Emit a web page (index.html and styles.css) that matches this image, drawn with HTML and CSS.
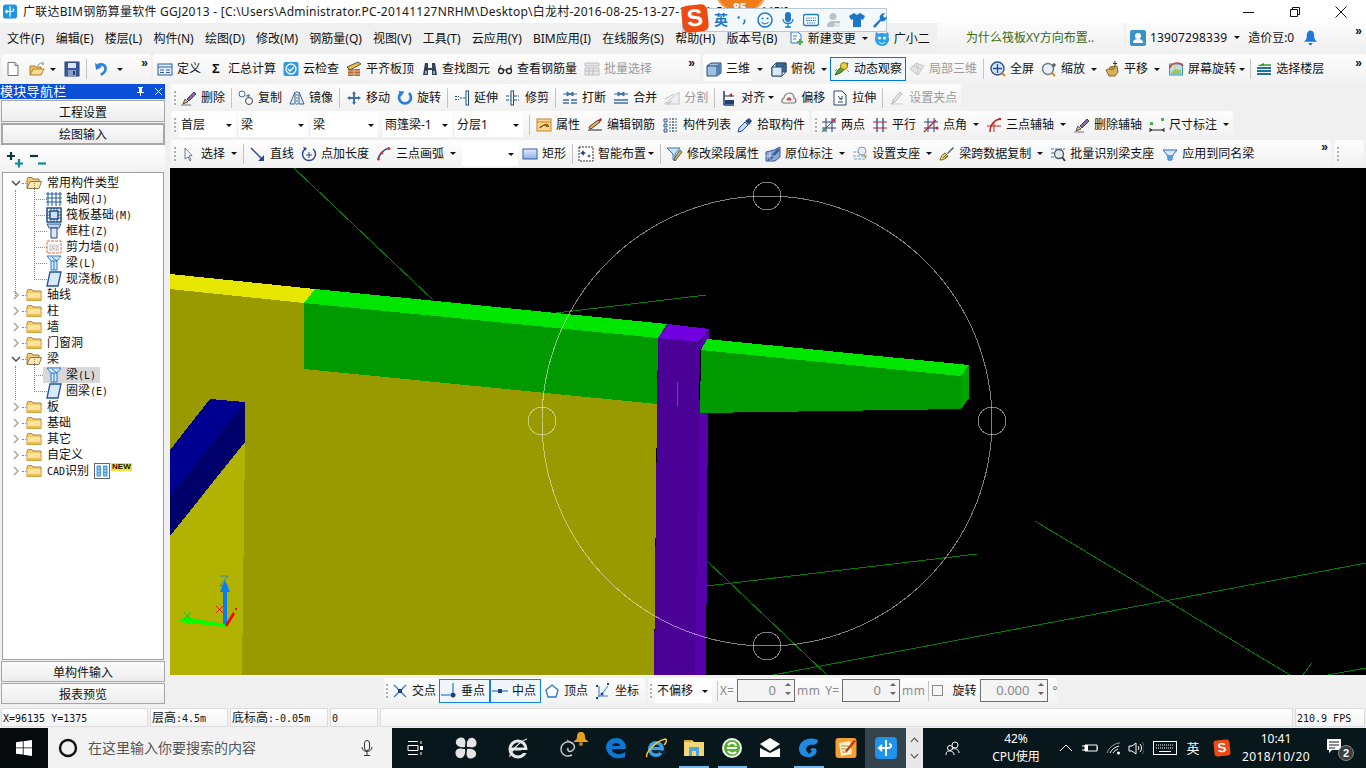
FILE: index.html
```html
<!DOCTYPE html>
<html lang="zh-CN">
<head>
<meta charset="utf-8">
<title>广联达BIM钢筋算量软件 GGJ2013</title>
<link rel="stylesheet" href="styles.css">
</head>
<body>
<svg class="defs" aria-hidden="true">
<symbol id="new" viewBox="0 0 16 16"><path d="M3 1.500h7l3 3v10H3z" fill="#fff" stroke="#777"/><path d="M10 1.500v3h3" fill="#ddd" stroke="#777"/></symbol>
<symbol id="open" viewBox="0 0 16 16"><path d="M1 14V5h5l1 1h5v2" fill="#eec45e" stroke="#a8842c"/><path d="M4 8h11l-3 6H1z" fill="#f8dc90" stroke="#a8842c"/><path d="M9 5c1-3 3-3 5-3l-1-1 2 2-2 1" fill="none" stroke="#6f8f8f"/></symbol>
<symbol id="save" viewBox="0 0 16 16"><rect x="1" y="1" width="14" height="14" fill="#37589f" stroke="#27407a"/><rect x="4" y="2" width="8" height="5" fill="#dce6f4"/><rect x="4" y="9" width="8" height="6" fill="#8b9dc2"/><rect x="9" y="10" width="2" height="4" fill="#27407a"/></symbol>
<symbol id="undo" viewBox="0 0 16 16"><path d="M5 4c5-2 9 1 7 6-1 2-3 3-4 4" fill="none" stroke="#2e7fd6" stroke-width="2.600"/><path d="M2 2l1 7 6-3z" fill="#2e7fd6"/></symbol>
<symbol id="def" viewBox="0 0 16 16"><rect x="1" y="3" width="14" height="11" fill="#e4effa" stroke="#2c5f9c"/><path d="M1 6h14M3 9h4M3 11.500h4M9 9h4M9 11.500h4" stroke="#2c5f9c" fill="none"/></symbol>
<symbol id="cloud" viewBox="0 0 16 16"><rect x="0.500" y="1" width="15" height="14" rx="2" fill="#2f9ae4"/><circle cx="8" cy="8" r="5" fill="none" stroke="#fff" stroke-width="1.300"/><path d="M5 8l2 2 4-4" fill="none" stroke="#fff" stroke-width="1.300"/></symbol>
<symbol id="flat" viewBox="0 0 16 16"><rect x="2" y="8" width="12" height="7" fill="#b06a3a"/><path d="M2 10h12M2 13h12M8 8v7" stroke="#e8c090"/><path d="M1 6l11-5 3 2L4 9z" fill="#f1c232" stroke="#555"/></symbol>
<symbol id="binoc" viewBox="0 0 16 16"><path d="M3 2h3v5h4V2h3l2 12H10V9H6v5H1z" fill="#33415a"/><path d="M3 10h2v3H3zM11 10h2v3h-2z" fill="#8fa4c0"/></symbol>
<symbol id="glass" viewBox="0 0 16 16"><circle cx="4" cy="10" r="2.500" fill="none" stroke="#222" stroke-width="1.300"/><circle cx="12" cy="10" r="2.500" fill="none" stroke="#222" stroke-width="1.300"/><path d="M6 9h4M2 8l2-4M14 8V4" fill="none" stroke="#222"/></symbol>
<symbol id="batch" viewBox="0 0 16 16"><path d="M1 2h14v3H1zM1 7h14v7H1z" fill="#e8e8e8" stroke="#c0c0c0"/><path d="M5 7v7M9 7v7M1 10h14" stroke="#c0c0c0"/></symbol>
<symbol id="cube" viewBox="0 0 16 16"><path d="M1 5l4-3h10v10l-4 3H1z" fill="#9dc3e6" stroke="#2a4a6a"/><path d="M1 5h10v10M11 5l4-3" fill="none" stroke="#2a4a6a"/><path d="M11 5l4-3v10l-4 3z" fill="#4f84b8"/></symbol>
<symbol id="top" viewBox="0 0 16 16"><path d="M1 6l4-4h10v9l-4 4H1z" fill="#fff" stroke="#2a4a6a"/><path d="M5 2h10v9H5z" fill="#3a6a9c" stroke="#2a4a6a"/><path d="M1 6h10v9H1z" fill="#dce8f4" stroke="#2a4a6a"/><path d="M1 6l4-4M11 6l4-4M11 15l4-4" stroke="#2a4a6a"/></symbol>
<symbol id="orbit" viewBox="0 0 16 16"><path d="M1 14c3-6 7-10 13-12-2 6-6 10-13 12z" fill="#5aa02c" stroke="#2d6d1a"/><circle cx="10" cy="5" r="3.500" fill="#e8d040" stroke="#8a7a10"/><path d="M3 8l-2 2M13 9l2 2" stroke="#999"/></symbol>
<symbol id="loc3d" viewBox="0 0 16 16"><path d="M1 8l6-6 8 3-6 9z" fill="#e4e4e4" stroke="#c4c4c4"/><path d="M4 5l8 3M7 2l2 6-1 5" stroke="#cacaca" fill="none"/></symbol>
<symbol id="fit" viewBox="0 0 16 16"><circle cx="7.500" cy="7.500" r="6.500" fill="#d5e4f6" stroke="#2f4f86" stroke-width="1.400"/><path d="M7.500 3v9M3 7.500h9" stroke="#1f4f96" stroke-width="1.300"/><path d="M12 12l3 3" stroke="#d08a20" stroke-width="2"/></symbol>
<symbol id="zoom" viewBox="0 0 16 16"><circle cx="7" cy="8" r="5.500" fill="#e9eff6" stroke="#6a7a8a" stroke-width="1.400"/><path d="M11 12l3 3" stroke="#c88a20" stroke-width="2"/><path d="M13 2v4M11 4h4" stroke="#333"/></symbol>
<symbol id="pan" viewBox="0 0 16 16"><path d="M2 9l3-1 1-2 7-1 1 6-3 4H5z" fill="#d8b060" stroke="#8a6a20"/><path d="M5 8l4 1M7 6l3 2M10 5l1 3" stroke="#8a6a20"/><path d="M11 0v5M9 2.500h4" stroke="#333"/></symbol>
<symbol id="srot" viewBox="0 0 16 16"><rect x="1.500" y="3" width="13" height="11" fill="#bfe0f4" stroke="#3a90c8"/><path d="M3 11l4-3 6 1v4H3z" fill="#9cc85a"/><circle cx="7" cy="6" r="1.500" fill="#f4d050"/><path d="M2 7C3 2 11 0 15 5" fill="none" stroke="#d8402a" stroke-width="1.500"/></symbol>
<symbol id="floor" viewBox="0 0 16 16"><path d="M1 7h14M1 10h14M1 13h14" stroke="#1f6fa8" stroke-width="1.800"/><path d="M1 5l7-3v3z" fill="#2ca02c"/><path d="M8 4h7" stroke="#2ca02c" stroke-width="1.500"/></symbol>
<symbol id="brush" viewBox="0 0 16 16"><path d="M2 14l2-5 3 3z" fill="#e8b860" stroke="#555"/><path d="M6 9l7-7 2 2-7 7z" fill="#8a6ab0" stroke="#444"/><path d="M0 15h10" stroke="#777"/></symbol>
<symbol id="copy" viewBox="0 0 16 16"><circle cx="4" cy="4" r="3" fill="none" stroke="#4a6a9a"/><circle cx="11" cy="11" r="3.500" fill="none" stroke="#444"/><path d="M7 6l5-2-1 3z" fill="#4a6a9a"/></symbol>
<symbol id="mirror" viewBox="0 0 16 16"><path d="M1 14L6 2v12zM15 14L10 2v12z" fill="#e4eefa" stroke="#3a5f8a"/><path d="M8 1v14" stroke="#3a5f8a" stroke-dasharray="2 1"/></symbol>
<symbol id="move" viewBox="0 0 16 16"><path d="M8 1l2 3H9v3h3V6l3 2-3 2V9H9v3h1l-2 3-2-3h1V9H4v1L1 8l3-2v1h3V4H6z" fill="#3f6fa8"/></symbol>
<symbol id="rot" viewBox="0 0 16 16"><path d="M4 3a6 6 0 1 0 8 0" fill="none" stroke="#2e7fd6" stroke-width="2.800"/><path d="M1.500 1l6 .5-3.500 5z" fill="#2e7fd6"/></symbol>
<symbol id="ext" viewBox="0 0 16 16"><path d="M1 6.500h4M1 9.500h4M6 8h5" stroke="#1f4f8a" stroke-dasharray="2 1"/><path d="M1 6.500h2M1 9.500h2" stroke="#1f4f8a"/><rect x="12" y="1" width="2.500" height="14" fill="#f4f8fc" stroke="#1f4f8a"/></symbol>
<symbol id="trim" viewBox="0 0 16 16"><path d="M1 6h6M1 10h6M9 6h5M9 10h5" stroke="#1f4f8a" stroke-dasharray="3 1"/><rect x="6" y="1" width="2.500" height="14" fill="#f4f8fc" stroke="#1f4f8a"/></symbol>
<symbol id="brk" viewBox="0 0 16 16"><path d="M1 10h6M9 10h6M1 13h6M9 13h6" stroke="#3f6fa8" stroke-width="1.500"/><path d="M1 4h4M5 2l3 2-3 2zM15 4h-4M11 2L8 4l3 2z" fill="#3f6fa8" stroke="#3f6fa8"/></symbol>
<symbol id="mrg" viewBox="0 0 16 16"><path d="M1 10h14M1 13h14" stroke="#3f6fa8" stroke-width="1.500"/><path d="M1 4h4M5 2l3 2-3 2zM15 4h-4M11 2L8 4l3 2z" fill="#3f6fa8" stroke="#3f6fa8"/></symbol>
<symbol id="split" viewBox="0 0 16 16"><path d="M1 14h14V2z" fill="#f0f0f0" stroke="#c4c4c4"/><path d="M1 9l9-5M3 14l5-3" stroke="#bbb"/></symbol>
<symbol id="align" viewBox="0 0 16 16"><path d="M3 1v14M3 15h10" stroke="#1f3f7a" stroke-width="1.500"/><path d="M3 6h10" stroke="#333"/><path d="M4 10h9v4H4z" fill="#1f3f7a"/><path d="M11 3l-3 2 3 2z" fill="#c02020"/></symbol>
<symbol id="off" viewBox="0 0 16 16"><path d="M3 13c-3 0-3-4 0-5 0-3 3-5 5-5 3 0 5 2 5 5 3 1 2 5 0 5z" fill="#f4f4f4" stroke="#777" stroke-width="1.200"/><path d="M6 10c0-3 4-3 4 0z" fill="#e87060" stroke="#c04030"/></symbol>
<symbol id="strc" viewBox="0 0 16 16"><path d="M2 1h8l4 4v10H2z" fill="#fff" stroke="#2a4a6a"/><path d="M6 6l4 4M7 9h3V6M6 12h5" fill="none" stroke="#2a4a6a"/></symbol>
<symbol id="grip" viewBox="0 0 16 16"><path d="M1 14h13" stroke="#ccc"/><path d="M5 12l-2 2 1-4 7-8 2 2-7 8z" fill="#e4e4e4" stroke="#bbb"/></symbol>
<symbol id="prop" viewBox="0 0 16 16"><rect x="1" y="2" width="14" height="12" fill="#f8d890" stroke="#d08030"/><path d="M1 5h14" stroke="#d08030"/><path d="M4 11l4-3 4 2 1-1-2-2-3 1-4 2z" fill="#b07820" stroke="#805810"/></symbol>
<symbol id="edit" viewBox="0 0 16 16"><path d="M1 13h14" stroke="#222"/><path d="M2 11l2 1 9-7-2-2-8 6z" fill="#e8b050" stroke="#444"/><path d="M11 3l2 2 2-2-1-2z" fill="#c03020"/></symbol>
<symbol id="list" viewBox="0 0 16 16"><path d="M1 2h3v3H1zM1 7h3v3H1zM1 12h3v3H1z" fill="#d4e4f4" stroke="#3a5a8a"/><path d="M6 2h9M6 5h9M6 8h9M6 11h9M6 14h9M10 1v14" stroke="#3a5a8a" stroke-dasharray="2 1"/></symbol>
<symbol id="pick" viewBox="0 0 16 16"><path d="M1 15l1-4 6-6 3 3-6 6z" fill="#c8dcf4" stroke="#2a4a8a"/><path d="M8 4l4-3 3 3-3 4z" fill="#2a4a8a"/></symbol>
<symbol id="twopt" viewBox="0 0 16 16"><path d="M1 5h14M1 11h14M5 1v14M11 1v14" stroke="#2a3f78"/><path d="M1 15L15 1" stroke="#d02020"/><circle cx="13" cy="3" r="1.500" fill="#d02020"/><circle cx="3" cy="13" r="1.500" fill="#2ca02c"/></symbol>
<symbol id="para" viewBox="0 0 16 16"><path d="M1 5h14M1 11h14" stroke="#d02020" stroke-width="1.200"/><path d="M5 1v14M11 1v14" stroke="#1f3f7a" stroke-width="1.200"/></symbol>
<symbol id="angl" viewBox="0 0 16 16"><path d="M1 5h14M1 11h14M5 1v14M11 1v14" stroke="#2a3f78"/><path d="M1 15L13 3" stroke="#d02020" stroke-width="1.300"/><circle cx="14" cy="11" r="1.500" fill="#d02020"/></symbol>
<symbol id="arcx" viewBox="0 0 16 16"><path d="M1 9h14M8 15V6" stroke="#d02020"/><path d="M4 15C4 8 8 3 14 2" fill="none" stroke="#c02020" stroke-width="1.400"/><circle cx="14" cy="2" r="1.200" fill="#c02020"/></symbol>
<symbol id="dim" viewBox="0 0 16 16"><rect x="1" y="5" width="3" height="3" fill="#4caf50"/><rect x="12" y="1" width="3" height="3" fill="#4caf50"/><path d="M1 11v4M15 11v4M1 13h14" stroke="#222"/><path d="M1 13l2-1v2zM15 13l-2-1v2z" fill="#222"/></symbol>
<symbol id="sel" viewBox="0 0 16 16"><path d="M4 2v11l3-2 2 4 1-1-2-4 3-.5z" fill="#fff" stroke="#6a7a8a"/></symbol>
<symbol id="line" viewBox="0 0 16 16"><path d="M1 2l12 12" stroke="#2a4a8a" stroke-width="1.400"/><path d="M14 15H8l6-6z" fill="#2a4a8a"/></symbol>
<symbol id="ptl" viewBox="0 0 16 16"><path d="M4 3a6.500 6.500 0 1 0 8 0" fill="none" stroke="#2a4a8a" stroke-width="1.500"/><path d="M2 1l4 1-2 3z" fill="#2a4a8a"/><path d="M8 6v6M5 9h6" stroke="#2a4a8a"/></symbol>
<symbol id="arc" viewBox="0 0 16 16"><path d="M2 14C3 8 7 4 13 2" fill="none" stroke="#2a4a8a" stroke-width="1.400"/><circle cx="2.500" cy="13" r="1.500" fill="#d04040"/><circle cx="6" cy="7" r="1.500" fill="#d04040"/><circle cx="13" cy="2.500" r="1.500" fill="#d04040"/></symbol>
<symbol id="rect" viewBox="0 0 16 16"><defs><linearGradient id="rg" x1="0" x2="0" y1="0" y2="1"><stop offset="0" stop-color="#e4ecfa"/><stop offset="1" stop-color="#8aaee8"/></linearGradient></defs><rect x="1" y="3" width="14" height="10" fill="url(#rg)" stroke="#3a5f9a"/></symbol>
<symbol id="smart" viewBox="0 0 16 16"><rect x="1" y="1" width="14" height="14" fill="#fff" stroke="#333" stroke-dasharray="2 1"/><path d="M5 4l1 2 2 1-2 1-1 2-1-2-2-1 2-1zM11 8l.7 1.500 1.300.5-1.300.5L11 12l-.7-1.500L9 10l1.300-.5z" fill="#1f3f7a"/></symbol>
<symbol id="modf" viewBox="0 0 16 16"><path d="M0 2h13L8 8v6H6V8z" fill="#c8e4f8" stroke="#2a7ab8"/><path d="M7 13l1 2 7-9-2-2z" fill="#e8b050" stroke="#555"/></symbol>
<symbol id="insi" viewBox="0 0 16 16"><path d="M1 6l8-2 6-3v10l-5 4H1z" fill="#8aa8d4" stroke="#3a5f9a"/><path d="M3 13l10-11 2 2L5 15H3z" fill="#3a5f9a"/><path d="M1 10h9M5 6v9" stroke="#fff" opacity=".6"/></symbol>
<symbol id="supp" viewBox="0 0 16 16"><circle cx="10" cy="5" r="4" fill="#e8eef4" stroke="#8a9aaa"/><path d="M1 6h5M1 10h14M2 13h11M12 9l3 3" stroke="#6aa0d0" stroke-dasharray="3 1"/><path d="M12 9l2 3" stroke="#c8a040" stroke-width="1.500"/></symbol>
<symbol id="brm" viewBox="0 0 16 16"><path d="M1 14c1-4 3-6 5-7l3 3c-2 3-5 4-8 4z" fill="#e8d080" stroke="#806a20"/><path d="M8 7l6-6 1 1-6 6z" fill="#4a5a8a"/><path d="M4 12l3-3M6 12l2-2" stroke="#806a20"/></symbol>
<symbol id="bsup" viewBox="0 0 16 16"><path d="M1 3h14M1 7h5M1 11h5" stroke="#2a7ab8" stroke-dasharray="3 1"/><circle cx="9" cy="8" r="4.500" fill="#e0e8f0" stroke="#555" stroke-width="1.300"/><path d="M12 11l3 4" stroke="#444" stroke-width="2"/></symbol>
<symbol id="appl" viewBox="0 0 16 16"><path d="M1 4h14l-5 6v4H6v-4z" fill="#d4e8f8" stroke="#2a6ab8"/><path d="M4 9h8l-4 6z" fill="#5a9ae0"/></symbol>
<symbol id="fld" viewBox="0 0 16 16"><path d="M1 13.500V4l1-1.500h4L7 4h8v9.500z" fill="#f8cc60" stroke="#a08848"/><path d="M1.500 6h13v7h-13z" fill="#fbe3a4"/><path d="M1.500 11h13v2.500h-13z" fill="#f2bd4a"/></symbol>
<symbol id="fldo" viewBox="0 0 16 16"><path d="M1 13V4l1-1.500h4L7 4h6v2" fill="#f3cc6c" stroke="#8a7a50"/><path d="M4 6.500h11.500L13 13.500H1z" fill="#fde9b4" stroke="#8a7a50"/></symbol>
<symbol id="grid" viewBox="0 0 16 16"><path d="M2 1v14M6 1v14M10 1v14M14 1v14M0 3h16M0 7h16M0 11h16" stroke="#2460a8" stroke-width="1.100"/></symbol>
<symbol id="raft" viewBox="0 0 16 16"><rect x="1" y="1" width="14" height="14" fill="#fff" stroke="#1f4f8a" stroke-width="1.500"/><rect x="4" y="4" width="8" height="8" fill="#cfe0f2" stroke="#1f4f8a" stroke-width="1.500"/><path d="M1 5h3M1 8h3M1 11h3M12 5h3M12 8h3M12 11h3M5 1v3M8 1v3M11 1v3M5 12v3M8 12v3M11 12v3" stroke="#1f4f8a"/></symbol>
<symbol id="colu" viewBox="0 0 16 16"><path d="M1 1h14l-2 4H3z" fill="#bcd4ee" stroke="#2a5a9a"/><path d="M5 5h6v10H5z" fill="#dce8f6" stroke="#1f3f8a"/></symbol>
<symbol id="wal" viewBox="0 0 16 16"><rect x="1" y="2" width="14" height="12" fill="#fff" stroke="#d87030" stroke-dasharray="3 1"/><path d="M3 5h10v7H3z" fill="#e2e2e2"/><path d="M4 11l1-1M7 9l1 1M10 11l1-1M6 7l1 1M11 7l1 1" stroke="#999"/></symbol>
<symbol id="bem" viewBox="0 0 16 16"><path d="M1 1h14l-4 5v9H5V6z" fill="#d8eafa" stroke="#2a78c8"/><path d="M5 6h6M8 6v9M6 2l5 4" stroke="#2a78c8"/></symbol>
<symbol id="slb" viewBox="0 0 16 16"><path d="M4 1h11l-3 14H1z" fill="#dce9fa" stroke="#1f4fa0" stroke-width="1.300"/></symbol>
<symbol id="cadi" viewBox="0 0 16 16"><rect x="0.500" y="0.500" width="15" height="15" fill="#fff" stroke="#666"/><rect x="2.500" y="2.500" width="4.500" height="11" fill="#4aa3ea"/><rect x="9" y="2.500" width="4.500" height="11" fill="#4aa3ea"/><path d="M4 5h1.500M4 8h1.500M4 11h1.500M10.500 5H12M10.500 8H12M10.500 11H12" stroke="#fff"/></symbol>
<symbol id="sx" viewBox="0 0 16 16"><path d="M2 2l12 12M14 2L2 14" stroke="#2a78c8" stroke-width="1.200"/><rect x="6" y="6" width="4" height="4" fill="#1f3f8a"/></symbol>
<symbol id="sp" viewBox="0 0 16 16"><path d="M12 0v15" stroke="#2a78c8" stroke-width="1.200"/><path d="M0 12h15" stroke="#2a78c8" stroke-width="1.200"/><rect x="10" y="10" width="4" height="4" fill="#1f3f8a"/></symbol>
<symbol id="sm" viewBox="0 0 16 16"><path d="M0 8h16" stroke="#2a78c8" stroke-width="1.200"/><rect x="6" y="6" width="4" height="4" fill="#1f3f8a"/></symbol>
<symbol id="sv" viewBox="0 0 16 16"><path d="M8 2l6 5-2 7H4L2 7z" fill="#fff" stroke="#2a78c8" stroke-width="1.300"/></symbol>
<symbol id="sc" viewBox="0 0 16 16"><path d="M4 3v11M3 13h10M13 3L6 12" stroke="#2a78c8"/><path d="M1 2l2 2M3 2L1 4M12 0l2 2M14 0l-2 2M1 14l2 2M3 14l-2 2" stroke="#1f3f8a"/><circle cx="7" cy="11" r="1.500" fill="#1f3f8a"/></symbol>
</svg>

<div class="overlay-ball"><span class="ball-text">85</span></div>
<div class="sogou">
  <span class="sg-logo">S</span>
  <span class="sg-en">英</span>
  <svg class="sg-i w12" viewBox="0 0 12 16"><circle cx="2" cy="5" r="1.500" fill="#1e78c8"/><path d="M8 8c2 0 2 3-1 5" fill="none" stroke="#1e78c8" stroke-width="1.800"/></svg>
  <svg class="sg-i" viewBox="0 0 16 16"><circle cx="8" cy="8" r="7" fill="none" stroke="#1e78c8" stroke-width="1.500"/><circle cx="5.500" cy="6.500" r="1" fill="#1e78c8"/><circle cx="10.500" cy="6.500" r="1" fill="#1e78c8"/><path d="M4.500 10c2 2.500 5 2.500 7 0" fill="none" stroke="#1e78c8" stroke-width="1.200"/></svg>
  <svg class="sg-i" viewBox="0 0 16 16"><rect x="5" y="0" width="6" height="10" rx="3" fill="#1e78c8"/><path d="M3 7c0 6 10 6 10 0M8 12v3M5 15h6" fill="none" stroke="#1e78c8" stroke-width="1.300"/></svg>
  <svg class="sg-i" viewBox="0 0 16 16"><rect x="0.500" y="2.500" width="15" height="11" rx="2" fill="#fff" stroke="#1e78c8" stroke-width="1.400"/><path d="M3 6h10M3 8.500h10M4 11h8" stroke="#1e78c8" stroke-width="1.200" stroke-dasharray="1.500 .8"/></svg>
  <svg class="sg-i" viewBox="0 0 16 16"><circle cx="7" cy="4.500" r="3.500" fill="#b9c3cb"/><path d="M1 14c0-4 3-5 6-5h7v6H1z" fill="#b9c3cb"/><text x="8" y="15" class="sg-26">26</text></svg>
  <svg class="sg-i" viewBox="0 0 16 16"><path d="M5 1L0 4l2 4 2-1v8h8V7l2 1 2-4-5-3-3 2z" fill="#1e78c8"/></svg>
  <svg class="sg-i" viewBox="0 0 16 16"><path d="M1 14l7-7c-1-3 1-6 5-6l-2 3 2 2 2-2c0 4-3 6-6 5l-6 7z" fill="#1e78c8"/></svg>
</div>

<header class="titlebar">
  <svg class="app-ic" viewBox="0 0 16 16"><rect width="16" height="16" rx="3" fill="#1f93ea"/><path d="M8 2v12M3 8h7c3 0 3-3 1-3M5 6L3 8l2 2" fill="none" stroke="#fff" stroke-width="1.400"/></svg>
  <span class="title-text">广联达BIM钢筋算量软件 GGJ2013 - [C:\Users\Administrator.PC-20141127NRHM\Desktop\白龙村-2016-08-25-13-27-15-11-50-1(11445)]</span>
  <div class="win-ctl">
    <svg class="wc" viewBox="0 0 12 12"><path d="M0 6.500h11" stroke="#111"/></svg>
    <svg class="wc" viewBox="0 0 12 12"><path d="M1.500 3.500h7v7h-7zM3.500 3.500v-2h7v7h-2" fill="none" stroke="#111"/></svg>
    <svg class="wc" viewBox="0 0 12 12"><path d="M.5.500l11 11M11.500.500l-11 11" stroke="#111"/></svg>
  </div>
</header>

<nav class="menubar">
  <div class="menu-main">
    <span class="mi">文件(F)</span><span class="mi">编辑(E)</span><span class="mi">楼层(L)</span><span class="mi">构件(N)</span><span class="mi">绘图(D)</span><span class="mi">修改(M)</span><span class="mi">钢筋量(Q)</span><span class="mi">视图(V)</span><span class="mi">工具(T)</span><span class="mi">云应用(Y)</span><span class="mi">BIM应用(I)</span><span class="mi">在线服务(S)</span><span class="mi">帮助(H)</span><span class="mi">版本号(B)</span>
    <span class="it m-new"><svg class="ic" viewBox="0 0 16 16"><path d="M3 1h7l3 3v8H3z" fill="#fff" stroke="#2a7ac8"/><path d="M5 5h4M5 8h3" stroke="#2a7ac8"/><path d="M9 10h2V8h2v2h2v2h-2v2h-2v-2H9z" fill="#4caf50"/></svg>新建变更</span><i class="ar"></i>
    <span class="it m-xiao"><svg class="ic" viewBox="0 0 16 16"><path d="M8 2c4 0 7 2 7 6s-3 7-7 7-7-3-7-7 3-6 7-6z" fill="#2aa0ee"/><path d="M1 5L2 1l3 2M15 5l-1-4-3 2" fill="#2aa0ee"/><circle cx="5.500" cy="7" r="1.500" fill="#fff"/><circle cx="10.500" cy="7" r="1.500" fill="#fff"/><path d="M5 11c2 2 4 2 6 0" stroke="#fff" fill="none"/></svg>广小二</span>
  </div>
  <div class="notice">为什么筏板XY方向布置..</div>
  <div class="account">
    <svg class="ic" viewBox="0 0 16 16"><rect width="16" height="16" rx="2" fill="#3a93c8"/><circle cx="8" cy="6" r="3" fill="#fff"/><path d="M3 13c0-3 2-4 5-4s5 1 5 4z" fill="#fff"/></svg>
    <span class="phone">13907298339</span><i class="ar acc-ar"></i>
    <span class="beans">造价豆:0</span>
    <svg class="bell" viewBox="0 0 14 16"><path d="M7 0c3 0 4 3 4 6 0 3 1 4 3 6H0c2-2 3-3 3-6 0-3 1-6 4-6z" fill="#1e78dc"/><path d="M5 13.500h4c0 3-4 3-4 0z" fill="#1e78dc"/></svg>
    <span class="chev">»</span>
  </div>
</nav>

<div class="tb-row row1">
  <div class="grp g-file">
    <svg class="ic"><use href="#new"/></svg><svg class="ic i-open"><use href="#open"/></svg><i class="ar ar-a"></i><svg class="ic i-save"><use href="#save"/></svg><i class="sep"></i><svg class="ic"><use href="#undo"/></svg><i class="ar ar-b"></i>
    <span class="chev c-file">»</span>
  </div>
  <div class="grp g-main">
    <span class="it first"><svg class="ic"><use href="#def"/></svg>定义</span>
    <span class="it"><b class="sigma">Σ</b>汇总计算</span>
    <span class="it"><svg class="ic"><use href="#cloud"/></svg>云检查</span>
    <span class="it"><svg class="ic"><use href="#flat"/></svg>平齐板顶</span>
    <span class="it w8"><svg class="ic"><use href="#binoc"/></svg>查找图元</span>
    <span class="it"><svg class="ic"><use href="#glass"/></svg>查看钢筋量</span>
    <span class="it off"><svg class="ic"><use href="#batch"/></svg>批量选择</span>
    <span class="chev c-main">»</span>
  </div>
  <div class="grp g-view">
    <span class="combo-it"><svg class="ic"><use href="#cube"/></svg>三维</span><i class="ar ar-v"></i>
    <span class="it view-top"><svg class="ic"><use href="#top"/></svg>俯视</span><i class="ar ar-w"></i>
    <span class="it active"><svg class="ic"><use href="#orbit"/></svg>动态观察</span>
    <span class="it off v-loc"><svg class="ic"><use href="#loc3d"/></svg>局部三维</span><i class="sep"></i>
    <span class="it"><svg class="ic"><use href="#fit"/></svg>全屏</span>
    <span class="it"><svg class="ic"><use href="#zoom"/></svg>缩放</span><i class="ar"></i>
    <span class="it w7"><svg class="ic"><use href="#pan"/></svg>平移</span><i class="ar"></i>
    <span class="it"><svg class="ic"><use href="#srot"/></svg>屏幕旋转</span><i class="ar ar-t"></i><i class="sep tight-both"></i>
    <span class="it"><svg class="ic"><use href="#floor"/></svg>选择楼层</span>
    <span class="chev c-view">»</span>
  </div>
</div>

<main class="workspace">
  <aside class="nav">
    <div class="nav-head"><span class="nav-title">模块导航栏</span>
      <svg class="nav-ic pin" viewBox="0 0 9 9"><path d="M2 0h5v1H6v4h2v1H5v3H4V6H1V5h2V1H2z" fill="#fff"/></svg>
      <svg class="nav-ic close" viewBox="0 0 9 9"><path d="M1 1l7 7M8 1L1 8" stroke="#fff"/></svg></div>
    <div class="nav-btn first-btn">工程设置</div>
    <div class="nav-btn current">绘图输入</div>
    <div class="nav-tools">
      <svg class="tool-ic" viewBox="0 0 16 16"><path d="M4 0v8M0 4h8" stroke="#0a3a3a" stroke-width="2.200"/><path d="M12 7v8.500M8 11.500h8" stroke="#0a8a9a" stroke-width="2.200"/></svg>
      <svg class="tool-ic m7" viewBox="0 0 16 16"><path d="M0 4h8" stroke="#0a3a3a" stroke-width="2.200"/><path d="M8 11.500h8" stroke="#0a8a9a" stroke-width="2.200"/></svg>
    </div>
    <div class="tree">
      <div class="tr"><svg class="exp"><path d="M1 3l4 4 4-4" fill="none" stroke="#444" stroke-width="1.300"/></svg><i class="h-dot"></i><svg class="ic"><use href="#fldo"/></svg><span class="lb">常用构件类型</span></div>
      <div class="kids long">
        <div class="tr ch"><svg class="ic"><use href="#grid"/></svg><span class="lb2">轴网<span class="lat">(J)</span></span></div>
        <div class="tr ch"><svg class="ic"><use href="#raft"/></svg><span class="lb2">筏板基础<span class="lat">(M)</span></span></div>
        <div class="tr ch"><svg class="ic"><use href="#colu"/></svg><span class="lb2">框柱<span class="lat">(Z)</span></span></div>
        <div class="tr ch"><svg class="ic"><use href="#wal"/></svg><span class="lb2">剪力墙<span class="lat">(Q)</span></span></div>
        <div class="tr ch"><svg class="ic"><use href="#bem"/></svg><span class="lb2">梁<span class="lat">(L)</span></span></div>
        <div class="tr ch"><svg class="ic"><use href="#slb"/></svg><span class="lb2">现浇板<span class="lat">(B)</span></span></div>
      </div>
      <div class="tr"><svg class="exp"><path d="M3 1l4 4-4 4" fill="none" stroke="#a8a8a8" stroke-width="1.500"/></svg><i class="h-dot"></i><svg class="ic"><use href="#fld"/></svg><span class="lb">轴线</span></div>
      <div class="tr"><svg class="exp"><path d="M3 1l4 4-4 4" fill="none" stroke="#a8a8a8" stroke-width="1.500"/></svg><i class="h-dot"></i><svg class="ic"><use href="#fld"/></svg><span class="lb">柱</span></div>
      <div class="tr"><svg class="exp"><path d="M3 1l4 4-4 4" fill="none" stroke="#a8a8a8" stroke-width="1.500"/></svg><i class="h-dot"></i><svg class="ic"><use href="#fld"/></svg><span class="lb">墙</span></div>
      <div class="tr"><svg class="exp"><path d="M3 1l4 4-4 4" fill="none" stroke="#a8a8a8" stroke-width="1.500"/></svg><i class="h-dot"></i><svg class="ic"><use href="#fld"/></svg><span class="lb">门窗洞</span></div>
      <div class="tr"><svg class="exp"><path d="M1 3l4 4 4-4" fill="none" stroke="#444" stroke-width="1.300"/></svg><i class="h-dot"></i><svg class="ic"><use href="#fldo"/></svg><span class="lb">梁</span></div>
      <div class="kids">
        <div class="tr ch sel"><svg class="ic"><use href="#bem"/></svg><span class="lb2">梁<span class="lat">(L)</span></span></div>
        <div class="tr ch"><svg class="ic"><use href="#slb"/></svg><span class="lb2">圈梁<span class="lat">(E)</span></span></div>
      </div>
      <div class="tr"><svg class="exp"><path d="M3 1l4 4-4 4" fill="none" stroke="#a8a8a8" stroke-width="1.500"/></svg><i class="h-dot"></i><svg class="ic"><use href="#fld"/></svg><span class="lb">板</span></div>
      <div class="tr"><svg class="exp"><path d="M3 1l4 4-4 4" fill="none" stroke="#a8a8a8" stroke-width="1.500"/></svg><i class="h-dot"></i><svg class="ic"><use href="#fld"/></svg><span class="lb">基础</span></div>
      <div class="tr"><svg class="exp"><path d="M3 1l4 4-4 4" fill="none" stroke="#a8a8a8" stroke-width="1.500"/></svg><i class="h-dot"></i><svg class="ic"><use href="#fld"/></svg><span class="lb">其它</span></div>
      <div class="tr"><svg class="exp"><path d="M3 1l4 4-4 4" fill="none" stroke="#a8a8a8" stroke-width="1.500"/></svg><i class="h-dot"></i><svg class="ic"><use href="#fld"/></svg><span class="lb">自定义</span></div>
      <div class="tr"><svg class="exp"><path d="M3 1l4 4-4 4" fill="none" stroke="#a8a8a8" stroke-width="1.500"/></svg><i class="h-dot"></i><svg class="ic"><use href="#fld"/></svg><span class="lb"><span class="lat">CAD</span>识别</span><svg class="ic cadi"><use href="#cadi"/></svg><span class="new-tag">NEW</span></div>
    </div>
    <div class="nav-btn low">单构件输入</div>
    <div class="nav-btn low">报表预览</div>
  </aside>

  <section class="center">
    <div class="tb-row row2">
      <div class="grp g-edit">
        <i class="gripper"></i>
        <span class="it first"><svg class="ic"><use href="#brush"/></svg>删除</span><i class="sep"></i>
        <span class="it"><svg class="ic"><use href="#copy"/></svg>复制</span>
        <span class="it"><svg class="ic"><use href="#mirror"/></svg>镜像</span><i class="sep"></i>
        <span class="it"><svg class="ic"><use href="#move"/></svg>移动</span>
        <span class="it"><svg class="ic"><use href="#rot"/></svg>旋转</span><i class="sep"></i>
        <span class="it"><svg class="ic"><use href="#ext"/></svg>延伸</span>
        <span class="it"><svg class="ic"><use href="#trim"/></svg>修剪</span><i class="sep"></i>
        <span class="it"><svg class="ic"><use href="#brk"/></svg>打断</span>
        <span class="it"><svg class="ic"><use href="#mrg"/></svg>合并</span>
        <span class="it off"><svg class="ic"><use href="#split"/></svg>分割</span><i class="sep"></i>
        <span class="it"><svg class="ic"><use href="#align"/></svg>对齐</span><i class="ar ar-t"></i>
        <span class="it w7"><svg class="ic"><use href="#off"/></svg>偏移</span>
        <span class="it"><svg class="ic"><use href="#strc"/></svg>拉伸</span><i class="sep"></i>
        <span class="it off"><svg class="ic"><use href="#grip"/></svg>设置夹点</span>
      </div>
    </div>
    <div class="tb-row row3">
      <div class="grp g-comb">
        <i class="gripper"></i>
        <span class="combo w57">首层<i class="ar"></i></span>
        <span class="combo w69">梁<i class="ar"></i></span>
        <span class="combo w67">梁<i class="ar"></i></span>
        <span class="combo w69 gap5">雨篷梁-1<i class="ar"></i></span>
        <span class="combo w68c">分层1<i class="ar"></i></span><i class="sep"></i>
        <span class="it"><svg class="ic"><use href="#prop"/></svg>属性</span>
        <span class="it"><svg class="ic"><use href="#edit"/></svg>编辑钢筋</span>
        <span class="it w8"><svg class="ic"><use href="#list"/></svg>构件列表</span>
        <span class="it w6"><svg class="ic"><use href="#pick"/></svg>拾取构件</span>
      </div>
      <div class="grp g-axis">
        <i class="gripper"></i>
        <span class="it first"><svg class="ic"><use href="#twopt"/></svg>两点</span>
        <span class="it"><svg class="ic"><use href="#para"/></svg>平行</span>
        <span class="it"><svg class="ic"><use href="#angl"/></svg>点角</span><i class="ar"></i>
        <span class="it w7"><svg class="ic"><use href="#arcx"/></svg>三点辅轴</span><i class="ar"></i>
        <span class="it w8"><svg class="ic"><use href="#brush"/></svg>删除辅轴</span>
        <span class="it"><svg class="ic"><use href="#dim"/></svg>尺寸标注</span><i class="ar"></i>
      </div>
    </div>
    <div class="tb-row row4">
      <div class="grp g-draw">
        <i class="gripper"></i>
        <span class="it first"><svg class="ic"><use href="#sel"/></svg>选择</span><i class="ar"></i><i class="sep"></i>
        <span class="it"><svg class="ic"><use href="#line"/></svg>直线</span>
        <span class="it"><svg class="ic"><use href="#ptl"/></svg>点加长度</span>
        <span class="it"><svg class="ic"><use href="#arc"/></svg>三点画弧</span><i class="ar"></i>
        <span class="combo w56 gap6"><i class="ar"></i></span>
        <span class="it w4"><svg class="ic"><use href="#rect"/></svg>矩形</span><i class="sep tight"></i>
        <span class="it"><svg class="ic"><use href="#smart"/></svg>智能布置</span><i class="ar ar-s"></i><i class="sep"></i>
        <span class="it"><svg class="ic"><use href="#modf"/></svg>修改梁段属性</span>
        <span class="it w6"><svg class="ic"><use href="#insi"/></svg>原位标注</span><i class="ar"></i>
        <span class="it w7"><svg class="ic"><use href="#supp"/></svg>设置支座</span><i class="ar"></i>
        <span class="it w7"><svg class="ic"><use href="#brm"/></svg>梁跨数据复制</span><i class="ar"></i>
        <span class="it w7"><svg class="ic"><use href="#bsup"/></svg>批量识别梁支座</span>
        <span class="it w8"><svg class="ic"><use href="#appl"/></svg>应用到同名梁</span>
        <span class="chev c-draw">»</span>
      </div>
      <div class="grp g-small"><i class="gripper"></i></div>
    </div>

    <svg class="canvas" viewBox="170 168 1196 507" preserveAspectRatio="none">
      <rect x="170" y="168" width="1196" height="507" fill="#000"/>
      <g class="ln">
        <path d="M294 168L433 300M556 313L706 295M707 586L977 554M707 561L827 675M1035 521L1290 675M773 675L1366 563M1303 675L1312 663M1328 675L1366 668"/>
      </g>
      <g class="solid">
        <polygon points="170,289 304,303 304,369 657,404 654,675 170,675" fill="#999900"/>
        <polygon points="170,274 315,289 304,303 170,289" fill="#e6e600"/>
        <polygon points="315,289 667,324 658,338 304,303" fill="#00e600"/>
        <polygon points="304,303 658,338 657,404 304,369" fill="#009900"/>
        <polygon points="245,442 242,675 170,675 170,536" fill="#b2b200"/>
        <polygon points="210,399 245,402 170,497 170,450" fill="#000090"/>
        <polygon points="245,402 245,442 170,536 170,497" fill="#00006a"/>
        <polygon points="698,400 708,400 706,675 695,675" fill="#5600aa"/>
        <polygon points="658,338 700,342 695,675 654,675" fill="#4b0096"/>
        <polygon points="668,324 709,329 699,342 658,338" fill="#7000e0"/>
        <polygon points="709,329 709,338 700,350 700,342" fill="#5600aa"/>
        <polygon points="707,339 969,365 961,376 701,350" fill="#00e600"/>
        <polygon points="701,350 961,376 961,409 700,413" fill="#009900"/>
        <polygon points="969,365 969,398 961,409 961,376" fill="#00a600"/>
      </g>
      <path class="ln2" d="M677 382V406"/>
      <g class="circ">
        <circle cx="767" cy="421" r="225"/>
        <circle cx="767" cy="196" r="14"/><circle cx="542" cy="421" r="14"/><circle cx="992" cy="421" r="14"/><circle cx="767" cy="646" r="14"/>
      </g>
      <g class="gizmo">
        <path d="M225 592V625" stroke="#0080ff" stroke-width="4"/>
        <polygon points="225,580 230,592 220,592" fill="#0080ff"/>
        <path d="M220 576h8l-8 10h8" stroke="#0080ff" fill="none" stroke-width="0.800"/>
        <polygon points="178,620 190,616 190,618 225,624 225,627 190,623 190,625" fill="#00ff00"/>
        <path d="M184 612l7 8M191 612l-7 8" stroke="#00c000" fill="none" stroke-width="0.800"/>
        <polygon points="225,625 233,612 235,614 227,627" fill="#ff0000"/>
        <rect x="235" y="608" width="2" height="2" fill="#ff0000"/>
        <path d="M216 606l7 7M223 606l-7 7" stroke="#e00000" fill="none" stroke-width="0.800"/>
      </g>
    </svg>

    <div class="snapbar">
      <div class="grp g-snap">
        <i class="gripper"></i>
        <span class="it s1"><svg class="ic"><use href="#sx"/></svg>交点</span>
        <span class="it on"><svg class="ic"><use href="#sp"/></svg>垂点</span>
        <span class="it on"><svg class="ic"><use href="#sm"/></svg>中点</span>
        <span class="it s2"><svg class="ic"><use href="#sv"/></svg>顶点</span>
        <span class="it s3"><svg class="ic"><use href="#sc"/></svg>坐标</span>
      </div>
      <div class="grp g-off">
        <i class="gripper"></i>
        <span class="combo w57">不偏移<i class="ar"></i></span><i class="sep sn"></i>
        <span class="gray">X=</span>
        <span class="num w58">0<span class="spin"><i></i><i></i></span></span>
        <span class="gray mm">mm</span>
        <span class="gray yl">Y=</span>
        <span class="num w58">0<span class="spin"><i></i><i></i></span></span>
        <span class="gray mm">mm</span><i class="sep sp4"></i>
        <i class="check"></i>
        <span class="rot-l">旋转</span>
        <span class="num w68n rl">0.000<span class="spin"><i></i><i></i></span></span>
        <span class="deg">°</span>
      </div>
    </div>
  </section>
</main>

<div class="status">
  <span class="cell c1"><span class="lat">X=96135 Y=1375</span></span>
  <span class="cell c2">层高<span class="lat">:4.5m</span></span>
  <span class="cell c3">底标高<span class="lat">:-0.05m</span></span>
  <span class="cell c4"><span class="lat">0</span></span>
  <span class="cell c5"></span>
  <span class="cell c6"><span class="lat">210.9 FPS</span></span>
</div>

<footer class="taskbar">
  <div class="start"><svg class="win" viewBox="0 0 16 16"><path d="M0 2.300L6.800 1.300v6.200H0zM7.600 1.200L16 0v7.500H7.600zM0 8.300h6.800v6.300L0 13.700zM7.600 8.300H16V16l-8.400-1.200z" fill="#fff"/></svg></div>
  <div class="search">
    <svg class="cort" viewBox="0 0 20 20"><circle cx="10" cy="10" r="8" fill="none" stroke="#111" stroke-width="2.400"/></svg>
    <span class="search-t">在这里输入你要搜索的内容</span>
    <svg class="mic" viewBox="0 0 12 16"><rect x="3.500" y="0.500" width="5" height="10" rx="2.500" fill="none" stroke="#333"/><path d="M1 7c0 6 10 6 10 0M6 12v3M3 15.500h6" fill="none" stroke="#333"/></svg>
  </div>
  <div class="tk w46"><svg class="ti" viewBox="0 0 16 16"><path d="M1 1.500h10M1 14.500h10M1 5.500h10v5H1zM14 1v3M14 12v3" fill="none" stroke="#fff"/><rect x="13" y="6" width="3" height="4" fill="#fff"/></svg></div>
  <div class="tk w52 ml2"><svg class="ti big" viewBox="0 0 22 22"><path d="M10 10C4 11 0 8 1 4s8-5 9-1c1 2 0 4 0 7zM12 10c-1-6 2-10 6-9s5 8 1 9c-2 1-4 0-7 0zM12 12c6-1 10 2 9 6s-8 5-9 1c-1-2 0-4 0-7zM10 12c1 6-2 10-6 9s-5-8-1-9c2-1 4 0 7 0z" fill="#e4e4e4"/></svg></div>
  <div class="tk w52"><svg class="ti big" viewBox="0 0 22 22"><ellipse cx="11" cy="12" rx="8" ry="8" fill="none" stroke="#e8e8e8" stroke-width="3"/><path d="M4 12h14" stroke="#e8e8e8" stroke-width="3"/><path d="M3 20c-1-3 8-15 17-18" fill="none" stroke="#e8e8e8" stroke-width="1.300"/><rect x="14" y="13" width="8" height="3" fill="#08171c"/></svg></div>
  <div class="tk w52 swirl"><svg class="ti big" viewBox="0 0 22 22"><path d="M13 18c-6 3-11-1-11-6s5-8 9-7 6 5 3 8-6 1-5-2" fill="none" stroke="#cfcfcf" stroke-width="1.400"/><path d="M8 3l6 4" stroke="#cfcfcf"/></svg><svg class="bellb" viewBox="0 0 14 14"><path d="M7 0c3 0 4 2 4 5 0 2 1 3 3 4v1H0V9c2-1 3-2 3-4 0-3 1-5 4-5z" fill="#e8a020"/><circle cx="7" cy="12" r="2" fill="#b87a10"/></svg></div>
  <div class="tk w40"><svg class="ti big" viewBox="0 0 22 22"><path d="M1 11C1 4 6 1 12 1c5 0 9 4 9 11H7c0 5 8 7 13 3v5c-7 3-17 1-19-9zM7 9h8c0-4-7-4-8 0z" fill="#0a78d4"/></svg></div>
  <div class="tk w39"><svg class="ti big" viewBox="0 0 22 22"><circle cx="11" cy="12" r="8" fill="#3aa0e8"/><circle cx="11" cy="12" r="4.500" fill="#0d2a3c"/><rect x="5" y="10" width="12" height="3" fill="#3aa0e8"/><rect x="15" y="13.500" width="6" height="3" fill="#0d2a3c"/><path d="M2 20c-2-3 7-15 18-18 2 0 2 3-1 6" fill="none" stroke="#f0c830" stroke-width="1.500"/></svg></div>
  <div class="tk w38"><svg class="ti big" viewBox="0 0 22 22"><path d="M1 3h8l2 2h10v14H1z" fill="#f4d678"/><path d="M1 3h8v2H1z" fill="#d8a838"/><rect x="6" y="10" width="10" height="9" fill="#4aa8e0"/><rect x="9" y="14" width="4" height="5" fill="#f4d678"/></svg></div>
  <div class="tk w38"><svg class="ti big" viewBox="0 0 22 22"><circle cx="11" cy="11" r="10" fill="#f4f4f4"/><circle cx="11" cy="11" r="8" fill="#58b030"/><path d="M6 11h10M7 8c3-3 7-3 8 1M7 14c2 3 6 3 8 1" stroke="#fff" stroke-width="2" fill="none"/></svg></div>
  <div class="tk w38"><svg class="ti big" viewBox="0 0 22 22"><path d="M1 7l10-6 10 6v13H1z" fill="#fff"/><path d="M1 7l10 7 10-7v4l-10 5-10-5z" fill="#0d1c22"/></svg></div>
  <div class="tk w38"><svg class="ti big" viewBox="0 0 22 22"><path d="M21 3c-8-4-19 0-19 9 0 6 6 9 12 8 4-1 7-5 5-8-2-2-5-1-6 1l2 1-3 3-3-4c0-3 3-6 7-5l3-1c1-1 2-2 2-4z" fill="#1e8ae0"/></svg></div>
  <div class="tk w38"><svg class="ti big" viewBox="0 0 22 22"><rect x="0.500" y="1" width="21" height="20" rx="3" fill="#f5a030"/><path d="M4 6l11-2 2 13-11 2z" fill="#fdf0c8"/><path d="M6 9h8M6 12h8M7 15h5" stroke="#b08a40"/><path d="M10 14l9-11 2 1-9 11z" fill="#c03020"/></svg></div>
  <div class="tk w41 act"><svg class="ti big" viewBox="0 0 22 22"><rect width="22" height="22" rx="4" fill="#1f93ea"/><path d="M11 3v16M4 11h9c4 0 4-4 1-4M7 8l-3 3 3 3" fill="none" stroke="#fff" stroke-width="2"/></svg></div>
  <div class="scroll"><svg viewBox="0 0 10 6" class="sc"><path d="M1 5l4-4 4 4" fill="none" stroke="#555" stroke-width="1.300"/></svg><svg viewBox="0 0 10 6" class="sc"><path d="M1 1l4 4 4-4" fill="none" stroke="#555" stroke-width="1.300"/></svg></div>
  <div class="tr-c w60"><svg class="tic" viewBox="0 0 16 16"><circle cx="10" cy="5" r="3" fill="none" stroke="#fff"/><circle cx="5" cy="8" r="2.500" fill="none" stroke="#fff"/><path d="M1 15c0-4 2-4 4-4s4 1 4 4M7 9c3-1 7 0 7 4" fill="none" stroke="#fff"/></svg></div>
  <div class="tr-c w66 cpu"><span>42%</span><span>CPU使用</span></div>
  <div class="tr-c w24 ml5"><svg class="tic" viewBox="0 0 16 16"><path d="M2 11l6-6 6 6" fill="none" stroke="#fff"/></svg></div>
  <div class="tr-c w24"><svg class="tic" viewBox="0 0 16 16"><path d="M3 5h12v6H3zM0 6h3M0 10h3M15 7h1v2h-1" fill="none" stroke="#fff"/><rect x="3" y="5" width="3" height="6" fill="#fff"/></svg></div>
  <div class="tr-c w24"><svg class="tic" viewBox="0 0 16 16"><path d="M1 13C3 7 9 3 14 3" fill="none" stroke="#999"/><path d="M4 13c2-4 5-6 9-7M7 13c1-2 3-3 5-4" fill="none" stroke="#fff"/><circle cx="12.500" cy="13" r="1.500" fill="#fff"/></svg></div>
  <div class="tr-c w20"><svg class="tic" viewBox="0 0 16 16"><path d="M1 6h3l4-3v11l-4-3H1z" fill="none" stroke="#fff"/><path d="M10 6c1 1 1 3 0 4M12 4c2 2 2 6 0 8" fill="none" stroke="#fff"/><path d="M14 2c3 3 3 9 0 12" fill="none" stroke="#666"/></svg></div>
  <div class="tr-c w38"><svg class="kb" viewBox="0 0 24 14"><rect x="0.500" y="0.500" width="23" height="13" fill="none" stroke="#fff"/><path d="M3 4h18M3 7h18" stroke="#fff" stroke-dasharray="1 1"/><path d="M6 10.500h12" stroke="#fff"/></svg></div>
  <div class="tr-c w18 cn">英</div>
  <div class="tr-c w40"><span class="tray-s">S</span></div>
  <div class="tr-c w68 clock"><span>10:41</span><span class="date">2018/10/20</span></div>
  <div class="tr-c w52 notif"><svg class="tic nt" viewBox="0 0 16 16"><path d="M1 1h14v11H6l-3 3v-3H1z" fill="#fff"/><path d="M3 4h10M3 7h10M3 10h6" stroke="#0d1c22"/></svg><span class="badge">2</span></div>
  <b class="bar b1"></b><b class="bar b2"></b><b class="bar b3"></b>
</footer>
</body>
</html>
```
FILE: styles.css
```css
* { box-sizing: border-box; }
html, body { margin: 0; padding: 0; }
body {
  position: relative;
  width: 1366px;
  height: 768px;
  overflow: hidden;
  display: flex;
  flex-direction: column;
  background: #f0f0f0;
  font: 12px/16px "Noto Sans", "Noto Sans CJK SC", sans-serif;
  color: #111;
}
i { font-style: normal; display: block; }
.defs { position: absolute; width: 0; height: 0; }

/* title */
.titlebar { height: 23px; background: #fff; display: flex; align-items: center; padding-left: 3px; flex: none; }
.app-ic { width: 14px; height: 15px; flex: none; }
.title-text { margin-left: 6px; font-size: 12px; letter-spacing: .24px; white-space: nowrap; color: #1a1a1a; flex: none; width: 800px; overflow: hidden; }
.win-ctl { margin-left: auto; display: flex; gap: 34px; padding-right: 19px; }
.wc { width: 12px; height: 12px; }

/* overlays */
.overlay-ball { position: absolute; left: 714px; top: -40px; width: 54px; height: 54px; border-radius: 50%; background: #f07c1c; border: 2px solid #f6a860; z-index: 2; }
.ball-text { position: absolute; left: 17px; top: 39px; font-size: 12px; color: #fff; font-weight: 700; line-height: 14px; }
.sogou { position: absolute; z-index: 3; left: 682px; top: 8px; width: 205px; height: 24px; background: #f3f8fb; border: 1px solid #b5c9d6; display: flex; align-items: center; padding-left: 31px; }
.sg-logo { position: absolute; left: -1px; top: -4px; width: 26px; height: 27px; background: #ee4a14; border-radius: 6px; transform: rotate(-6deg); color: #fff; font: 700 24px/26px "Liberation Sans", sans-serif; text-align: center; }
.sg-en { color: #1e78c8; font-size: 14px; font-weight: 700; width: 15px; }
.sg-i { width: 16px; height: 16px; margin-left: 7px; flex: none; }
.sg-i.w12 { width: 10px; margin-left: 9px; margin-right: 3px; }
.sg-26 { font: 700 6px "Liberation Sans", sans-serif; fill: #fff; }

/* menu */
.menubar { height: 31px; display: flex; flex: none; position: relative; }
.menu-main { width: 937px; display: flex; align-items: center; padding-left: 7px; }
.mi { margin-right: 11.2px; white-space: nowrap; }
.m-new { margin-left: -1px !important; }
.m-xiao { margin-left: 6px !important; }
.notice { width: 187px; height: 29px; background: linear-gradient(#fbfbfb, #f0f0f0); color: #3a6a10; display: flex; align-items: center; padding-left: 29px; border-radius: 3px; }
.account { width: 240px; margin-left: 2px; display: flex; align-items: center; padding-left: 4px; background: linear-gradient(#fbfbfb, #f0f0f0); height: 29px; position: relative; border-radius: 3px 0 0 3px; }
.phone { margin-left: 4px; letter-spacing: .15px; }
.acc-ar { margin-left: 7px !important; }
.beans { margin-left: 8px; }
.bell { width: 13px; height: 16px; margin-left: 10px; }
.chev { font: 700 12px/12px "Liberation Sans", sans-serif; color: #111; }
.account .chev { position: absolute; right: 4px; top: 2px; }

/* toolbars */
.tb-row { display: flex; flex: none; }
.row1 { height: 30px; }
.row2 { height: 27px; padding-left: 1px; }
.row3 { height: 29px; padding-left: 1px; gap: 3px; }
.row4 { height: 28px; padding-left: 1px; gap: 3px; }
.grp { display: flex; align-items: center; position: relative; height: 27px; background: linear-gradient(#fdfdfd, #f1f1f1); border-radius: 3px; flex: none; }
.row1 .grp { height: 30px; }
.g-file { margin-left: 2px; width: 149px; padding-left: 3px; }
.g-main { width: 547px; margin-left: 2px; padding-left: 4px; }
.g-view { flex: 1; margin-left: 3px; padding-left: 1px; }
.it { display: flex; align-items: center; gap: 4px; margin-left: 7px; white-space: nowrap; flex: none; }
.ar + .it { margin-left: 8px; }
.it.first { margin-left: 0; }
.sep + .it { margin-left: 0; }
.it.w8 { margin-left: 8px; }
.it.w7 { margin-left: 7px; }
.it.w6 { margin-left: 6px; }
.it.w4 { margin-left: 4px; }
.off { color: #9a9a9a; }
.ic { width: 16px; height: 16px; flex: none; display: block; }
.i-open { margin-left: 8px; }
.i-save { margin-left: 8px; }
.sigma { width: 16px; text-align: center; font: 700 13px/16px "Liberation Sans", sans-serif; }
.sep { width: 1px; height: 20px; background: #c4c4c4; margin: 0 6px; flex: none; }
.sep.tight { margin: 0 5px 0 6px; }
.sep.tight-both { margin: 0 5px; }
.sep.sn { margin: 0 2px 0 5px; }
.ar { width: 0; height: 0; border-left: 3px solid transparent; border-right: 3px solid transparent; border-top: 3px solid #111; margin-left: 6px; flex: none; }
.ar-a { margin-left: 5px; }
.ar-b { margin-left: 8px; }
.ar-t { margin-left: 3px; }
.ar-s { margin-left: 2px; }
.ar-v { margin-left: 7px; }
.ar-w { margin-left: 6px; }
.c-file { position: absolute; right: 3px; top: 3px; }
.c-main { position: absolute; right: 5px; top: 3px; }
.c-view { position: absolute; right: 4px; top: 3px; }
.c-draw { position: absolute; right: 3px; top: 1px; }
.combo-it { display: flex; align-items: center; gap: 4px; background: #fff; height: 24px; padding-left: 2px; }
.view-top { margin-left: 8px !important; }
.active { margin-left: 3px !important; height: 24px; padding: 0 3px; border: 1px solid #0078d7; background: #f2f7fc; }
.v-loc { margin-left: 3px !important; }

.gripper { width: 2px; height: 14px; margin-left: 3px; flex: none; background: repeating-linear-gradient(#b0b0b0 0 2px, transparent 2px 4px); }
.g-edit { width: 790px; }
.g-edit .first { margin-left: 5px; }
.g-comb { width: 638px; }
.g-axis { width: 421px; }
.g-axis .first { margin-left: 4px; }
.g-draw { width: 1160px; }
.g-draw .first { margin-left: 5px; }
.g-small { width: 30px; }
.combo { position: relative; height: 24px; background: #fff; display: flex; align-items: center; padding-left: 2px; margin-left: 3px; flex: none; white-space: nowrap; }
.combo .ar { position: absolute; right: 4px; top: 11px; margin: 0; }
.w57 { width: 57px; } .w69 { width: 69px; } .w67 { width: 67px; } .w68c { width: 68px; } .w56 { width: 56px; }
.gap5 { margin-left: 5px; }
.gap6 { margin-left: 6px; }

/* main */
.workspace { height: 624px; display: flex; flex: none; }
.nav { width: 165px; margin-right: 5px; padding-bottom: 4px; display: flex; flex-direction: column; flex: none; }
.center { width: 1196px; display: flex; flex-direction: column; position: relative; }
.center .tb-row { width: 1196px; }
.nav-head { height: 15px; background: #0a4fd8; color: #fff; display: flex; align-items: center; flex: none; }
.nav-title { font-size: 13px; letter-spacing: .3px; line-height: 15px; }
.nav-ic { width: 9px; height: 9px; }
.pin { margin-left: 69px; }
.close { margin-left: 9px; }
.nav-btn { height: 22px; margin: 1px 0 0 1px; background: linear-gradient(#fbfbfb, #ededed); border: 1px solid #a6a6a6; text-align: center; line-height: 21px; flex: none; }
.nav-btn.first-btn { line-height: 23px; }
.nav-btn.current { border-width: 2px; line-height: 19px; }
.nav-btn.low { height: 21px; line-height: 21px; }
.nav-tools { height: 27px; background: linear-gradient(#fff, #f2f2f2); display: flex; align-items: center; padding: 3px 0 0 7px; flex: none; }
.tool-ic { width: 16px; height: 16px; }
.m7 { margin-left: 7px; }
.tree { flex: 1; margin: 0 1px 0 2px; border: 1px solid #a0a0a0; background: #fff; padding-top: 2px; min-height: 0; }
.tr { height: 16px; display: flex; align-items: center; position: relative; padding-left: 8px; font-size: 12px; white-space: nowrap; }
.exp { width: 10px; height: 10px; flex: none; }
.h-dot { width: 4px; border-top: 1px dotted #888; margin-left: 1px; flex: none; }
.lb { margin-left: 5px; }
.lb2 { margin-left: 4px; }
.lat { font: 10px/16px "DejaVu Sans Mono", "Noto Sans CJK SC", monospace; }
.ch { padding-left: 43px; }
.ch::before { content: ""; position: absolute; left: 31px; top: -8px; width: 12px; height: 16px; border-left: 1px dotted #888; border-bottom: 1px dotted #888; }
.ch .ic { position: relative; }
.kids { position: relative; }
.kids::before { content: ""; position: absolute; left: 12px; top: -1px; bottom: -1px; border-left: 1px dotted #888; }
.kids.long::before { bottom: -11px; }
.sel::after { content: ""; position: absolute; left: 40px; top: 0; width: 57px; height: 16px; background: #d8d8d8; z-index: 0; }
.sel .ic, .sel .lb2 { position: relative; z-index: 1; }
.cadi { margin-left: 5px; }
.new-tag { font: 700 8px/8px "Liberation Sans", sans-serif; color: #111; background: #f5e23c; padding: 0 1px; margin-top: -9px; margin-left: 1px; }

.canvas { width: 1196px; height: 507px; display: block; flex: none; }
.canvas .ln path { stroke: #008000; fill: none; stroke-width: 1; shape-rendering: crispEdges; }
.solid polygon { shape-rendering: crispEdges; }
.ln2 { stroke: #00a000; fill: none; shape-rendering: crispEdges; }
.circ circle { fill: none; stroke: #fff; stroke-opacity: .5; stroke-width: 1; shape-rendering: crispEdges; }

/* snap bar */
.snapbar { height: 33px; display: flex; align-items: center; padding-left: 214px; flex: none; gap: 3px; }
.snapbar .grp { height: 28px; padding-bottom: 2px; }
.g-snap { width: 261px; }
.g-snap .gripper { margin-left: 2px; }
.s1 { margin-left: 4px; }
.on { margin-left: 0 !important; height: 24px; padding: 0 1px; border: 1px solid #0a84e0; background: #f0f6fc; width: 51px; }
.s1 + .on { margin-left: 3px !important; }
.s2 { margin-left: 3px; }
.s3 { margin-left: 7px; }
.g-off { width: 409px; }
.g-off .gripper { margin-left: 2px; }
.g-off .combo { margin-left: 3px; }
.gray { color: #8a8a8a; white-space: nowrap; flex: none; }
.num { position: relative; height: 23px; border: 1px solid #6e6e6e; background: #f4f4f4; margin-left: 3px; flex: none; color: #888; text-align: right; padding-right: 18px; line-height: 21px; font-size: 13px; }
.w58 { width: 58px; } .w68n { width: 68px; }
.rl { margin-left: 4px; }
.spin { position: absolute; right: 3px; top: 3px; display: flex; flex-direction: column; gap: 6px; }
.spin i { width: 0; height: 0; border-left: 3px solid transparent; border-right: 3px solid transparent; }
.spin i:first-child { border-bottom: 3px solid #666; }
.spin i:last-child { border-top: 3px solid #666; }
.mm { margin-left: 2px; letter-spacing: .5px; }
.yl { margin-left: 5px; }
.sep.sp4 { margin: 0 3px; }
.check { width: 11px; height: 11px; border: 1px solid #8a8a8a; background: #f6f6f6; flex: none; }
.rot-l { margin-left: 9px; white-space: nowrap; flex: none; }
.deg { margin-left: 4px; color: #777; }

/* status */
.status { height: 20px; display: flex; flex: none; padding-left: 1px; gap: 2px; }
.cell { height: 19px; border: 1px solid #dcdcdc; background: linear-gradient(#fff, #f4f4f4); padding-left: 1px; line-height: 17px; flex: none; white-space: nowrap; }
.c1 { width: 147px; } .c2 { width: 78px; } .c3 { width: 98px; } .c4 { width: 48px; } .c5 { width: 913px; } .c6 { width: 70px; }

/* taskbar */
.taskbar { height: 40px; background: #08171c; color: #fff; display: flex; align-items: center; flex: none; position: relative; }
.start { width: 48px; height: 40px; background: #050a0c; display: flex; align-items: center; justify-content: center; flex: none; }
.win { width: 16px; height: 16px; }
.search { width: 344px; height: 40px; background: #f2f2f2; color: #555; display: flex; align-items: center; padding-left: 10px; flex: none; }
.cort { width: 20px; height: 20px; flex: none; }
.search-t { margin-left: 10px; font-size: 14px; width: 273px; }
.mic { width: 12px; height: 16px; }
.tk { height: 40px; display: flex; align-items: center; justify-content: center; flex: none; position: relative; }
.ti { width: 16px; height: 16px; }
.ti.big { width: 22px; height: 22px; }
.w46 { width: 46px; } .w52 { width: 52px; } .w40 { width: 40px; } .w39 { width: 39px; } .w38 { width: 38px; } .w41 { width: 41px; }
.ml2 { margin-left: 2px; }
.ml5 { margin-left: 5px; }
.bellb { position: absolute; left: 30px; top: 4px; width: 14px; height: 14px; }
.act { background: #33444c; }
.scroll { width: 17px; height: 40px; background: #e8e8e8; display: flex; flex-direction: column; justify-content: space-between; align-items: center; padding: 9px 0; flex: none; }
.sc { width: 9px; height: 6px; }
.tr-c { height: 40px; display: flex; align-items: center; justify-content: center; flex: none; }
.w60 { width: 60px; } .w66 { width: 66px; } .w24 { width: 24px; } .w20 { width: 20px; } .w18 { width: 18px; } .w68 { width: 68px; }
.tic { width: 16px; height: 16px; }
.cpu, .clock { flex-direction: column; line-height: 18px; white-space: nowrap; }
.date { letter-spacing: .4px; }
.kb { width: 24px; height: 14px; }
.cn { font-size: 13px; }
.tray-s { width: 16px; height: 16px; background: #ee4a14; border-radius: 3px; font: 700 13px/16px "Liberation Sans", sans-serif; text-align: center; transform: rotate(-6deg); }
.notif { position: relative; padding-right: 4px; }
.nt { width: 16px; height: 16px; margin-top: -4px; }
.badge { position: absolute; left: 28px; top: 17px; width: 16px; height: 16px; border-radius: 50%; background: #3a3f42; border: 1px solid #888; font: 700 11px/14px "Liberation Sans", sans-serif; text-align: center; }
.bar { position: absolute; bottom: 0; height: 2px; background: #76b9ed; }
.b1 { left: 679px; width: 30px; } .b2 { left: 718px; width: 29px; } .b3 { left: 794px; width: 30px; }
```
